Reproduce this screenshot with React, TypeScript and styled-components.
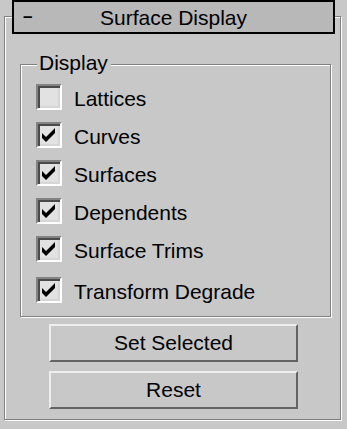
import React from "react";
import styled, { createGlobalStyle } from "styled-components";

const Global = createGlobalStyle`
  html, body { margin: 0; padding: 0; background: #c8c8c8; }
  * { box-sizing: border-box; }
`;

const Page = styled.div`
  width: 347px;
  height: 429px;
  padding: 0 6px 0 4px;
  background: #c8c8c8;
  font-family: "Liberation Sans", Arial, sans-serif;
  font-size: 21px;
  color: #000;
  overflow: hidden;
`;

const Header = styled.div`
  position: relative;
  z-index: 1;
  height: 34px;
  margin: 0 6px 0 8px;
  border: 2px solid #000;
  background: #b8b8b8;
  display: flex;
  align-items: center;
  padding-left: 9px;
`;

const Minus = styled.span`
  width: 12px;
  display: inline-block;
  font-size: 17px;
  font-weight: bold;
  line-height: 24px;
`;

const Title = styled.span`
  flex: 1;
  text-align: center;
  line-height: 24px;
  padding-top: 1px;
  padding-right: 21px;
`;

const Panel = styled.div`
  margin-top: -18px;
  border: 1px solid #808080;
  box-shadow: inset 1px 1px 0 #fff, 1px 1px 0 #fff;
  padding: 47px 9px 10px 15px;
  display: flex;
  flex-direction: column;
`;

const Group = styled.div`
  border: 1px solid #808080;
  box-shadow: inset 1px 1px 0 #fff, 1px 1px 0 #fff;
  display: flex;
  flex-direction: column;
  padding: 0 0 7px 15px;
`;

const Caption = styled.span`
  align-self: flex-start;
  background: #c8c8c8;
  margin: -14px 0 3px 1px;
  padding: 0 3px 0 2px;
  line-height: 24px;
`;

const Row = styled.label<{ $extra?: number }>`
  height: 38px;
  margin-top: ${(p) => p.$extra ?? 0}px;
  display: flex;
  align-items: center;
  gap: 12px;
`;

const Box = styled.span`
  width: 26px;
  height: 26px;
  flex: none;
  border: 2px solid;
  border-color: #838383 #ffffff #ffffff #838383;
  box-shadow: inset 2px 2px 0 #4a4a4a, inset -2px -2px 0 #d6d6d6;
  background: #e2e2e2;
  display: flex;
`;

const Text = styled.span`
  line-height: 24px;
  padding-top: 3px;
`;

const Button = styled.button`
  height: 38px;
  margin-left: 29px;
  width: 249px;
  border: 2px solid;
  border-color: #eeeeee #636363 #636363 #eeeeee;
  background: #c8c8c8;
  font-family: "Liberation Sans", Arial, sans-serif;
  font-size: 21px;
  color: #000;
  padding: 0;
  & + & {
    margin-top: 9px;
  }
`;

const ButtonGap = styled.div`
  height: 7px;
`;

const Check = () => (
  <svg width="22" height="22" viewBox="0 0 22 22">
    <polygon points="4,9 8,13 17,4 17,9 8,18 4,14" fill="#000" />
  </svg>
);

const items: { label: string; checked: boolean; extra?: number }[] = [
  { label: "Lattices", checked: false },
  { label: "Curves", checked: true },
  { label: "Surfaces", checked: true },
  { label: "Dependents", checked: true },
  { label: "Surface Trims", checked: true },
  { label: "Transform Degrade", checked: true, extra: 3 },
];

export default function App() {
  return (
    <Page>
      <Global />
      <Header>
        <Minus>–</Minus>
        <Title>Surface Display</Title>
      </Header>
      <Panel>
        <Group>
          <Caption>Display</Caption>
          {items.map((it) => (
            <Row key={it.label} $extra={it.extra}>
              <Box>{it.checked && <Check />}</Box>
              <Text>{it.label}</Text>
            </Row>
          ))}
        </Group>
        <ButtonGap />
        <Button>Set Selected</Button>
        <Button>Reset</Button>
      </Panel>
    </Page>
  );
}
